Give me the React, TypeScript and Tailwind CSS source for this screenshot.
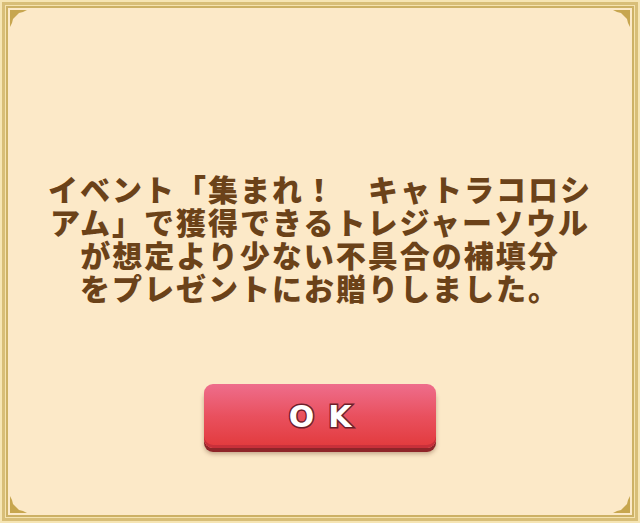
import React from "react";

function Corner({ className }: { className: string }) {
  return (
    <svg
      className={`absolute ${className}`}
      width="18"
      height="18"
      viewBox="0 0 18 18"
    >
      <path d="M0 0 H17 L13 2 L9 3 L7 5 L5 7 L3 9 L2 13 L0 17 Z" fill="#c7a64f" />
    </svg>
  );
}

export default function App() {
  const lines = [
    "イベント「集まれ！　キャトラコロシ",
    "アム」で獲得できるトレジャーソウル",
    "が想定より少ない不具合の補填分",
    "をプレゼントにお贈りしました。",
  ];

  return (
    <div className="w-[640px] h-[523px] bg-[#f6e5b4] p-[2px]">
      <div className="h-full border-[3px] border-[#d8be78]">
        <div className="h-full p-[1px] bg-[#f5e3b0]">
          <div className="relative h-full border-2 border-[#cdb165] bg-[#fce9c8] flex flex-col items-center">
            <Corner className="top-[2px] left-[2px]" />
            <Corner className="top-[2px] right-[2px] -scale-x-100" />
            <Corner className="bottom-[2px] left-[2px] -scale-y-100" />
            <Corner className="bottom-[2px] right-[2px] -scale-100" />

            <p
              className="mt-[164px] text-center text-[30px] leading-[33px] font-black tracking-[2px] text-[#6b4219]"
              style={{ fontFamily: '"Noto Sans CJK JP", "Noto Sans", sans-serif' }}
            >
              {lines.map((l, i) => (
                <React.Fragment key={l}>
                  {i > 0 && <br />}
                  {l}
                </React.Fragment>
              ))}
            </p>

            <button className="mt-[80px] w-[232px] h-[64px] rounded-[9px] bg-gradient-to-b from-[#ee6d8c] via-[#e9505e] to-[#e2393b] shadow-[inset_0_-3px_0_#c8303a,0_4px_0_#8f2529,0_6px_4px_rgba(90,40,20,0.35)] flex items-center justify-center">
              <span
                className="text-white text-[30px] font-black tracking-[14px] pl-[14px]"
                style={{
                  fontFamily: '"DejaVu Sans", sans-serif',
                  WebkitTextStroke: "3px #6e1f2a",
                  paintOrder: "stroke fill",
                }}
              >
                OK
              </span>
            </button>
          </div>
        </div>
      </div>
    </div>
  );
}
